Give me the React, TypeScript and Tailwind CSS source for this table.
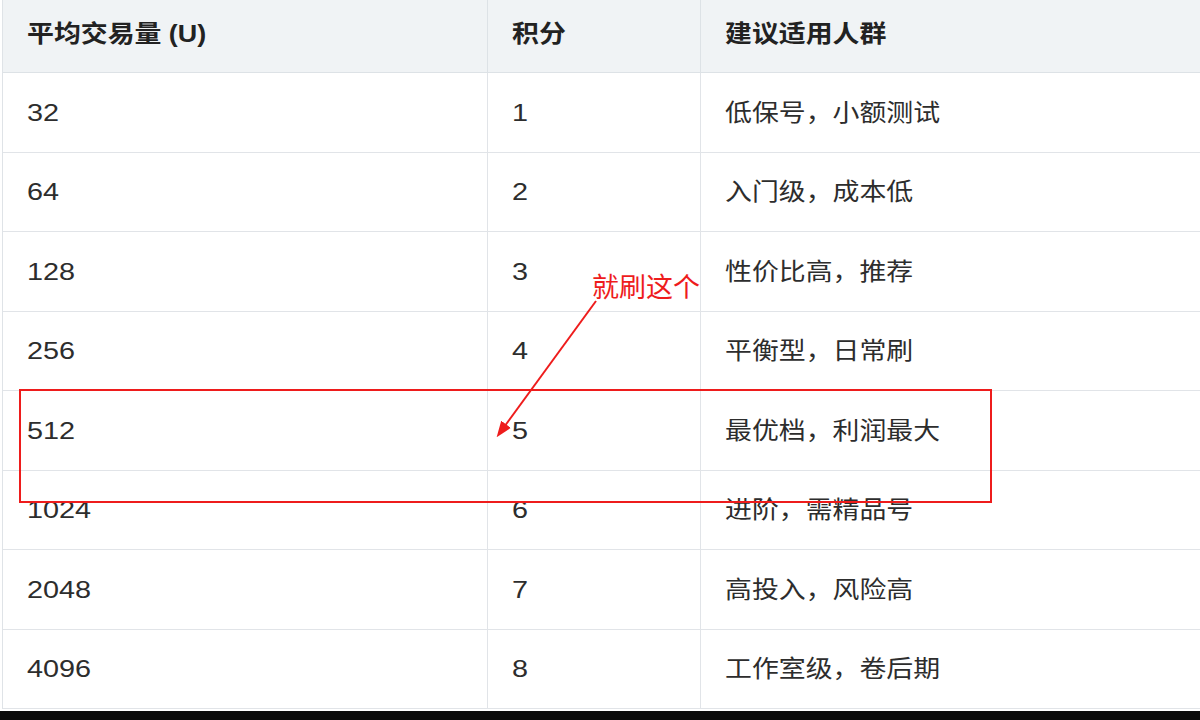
const rows = [
  { amount: "32", score: "1", who: "低保号，小额测试", h: "h-[80px]" },
  { amount: "64", score: "2", who: "入门级，成本低", h: "h-[79px]" },
  { amount: "128", score: "3", who: "性价比高，推荐", h: "h-[80px]" },
  { amount: "256", score: "4", who: "平衡型，日常刷", h: "h-[79px]" },
  { amount: "512", score: "5", who: "最优档，利润最大", h: "h-[80px]" },
  { amount: "1024", score: "6", who: "进阶，需精品号", h: "h-[79px]" },
  { amount: "2048", score: "7", who: "高投入，风险高", h: "h-[80px]" },
  { amount: "4096", score: "8", who: "工作室级，卷后期", h: "h-[79px]" },
];

// the screenshot is a little stretched sideways, so text is widened to match
const Wide = ({ children }: { children: React.ReactNode }) => (
  <span className="inline-block origin-left scale-x-[1.12] whitespace-nowrap">{children}</span>
);

const Num = ({ children }: { children: React.ReactNode }) => (
  <span className="inline-block origin-left scale-x-[1.2] whitespace-nowrap">{children}</span>
);

const Annotation = () => (
  <svg className="pointer-events-none absolute inset-0" width="1200" height="720">
    <defs>
      <marker id="head" markerWidth="8" markerHeight="8" refX="6" refY="4" orient="auto" markerUnits="strokeWidth">
        <path d="M0,1 L8,4 L0,7 z" fill="#ee1c1c" />
      </marker>
    </defs>
    <rect x="20" y="390" width="971" height="112" fill="none" stroke="#ee1c1c" strokeWidth="2" />
    <line x1="596" y1="301" x2="499" y2="434" stroke="#ee1c1c" strokeWidth="2" markerEnd="url(#head)" />
  </svg>
);

export default function App() {
  return (
    <div
      className="relative flex h-[720px] w-[1200px] flex-col overflow-hidden bg-white text-[#2d2d2d]"
      style={{ fontFamily: '"Liberation Sans", "Noto Sans CJK SC", sans-serif' }}
    >
      <div className="ml-[2px] flex flex-col border-l border-[#dfe3e7]">
        {/* header */}
        <div className="grid h-[73px] grid-cols-[485px_213px_1fr] border-b border-[#dde2e6] bg-[#f0f3f5] text-[24px] font-bold text-[#222]">
          <div className="flex items-center border-r border-[#dde2e6] pl-[24px] pb-[4px]">
            <Wide>平均交易量 (U)</Wide>
          </div>
          <div className="flex items-center border-r border-[#dde2e6] pl-[24px] pb-[4px]">
            <Wide>积分</Wide>
          </div>
          <div className="flex items-center pl-[24px] pb-[4px]">
            <Wide>建议适用人群</Wide>
          </div>
        </div>
        {rows.map((r) => (
          <div key={r.amount} className={`grid grid-cols-[485px_213px_1fr] border-b border-[#e1e4e8] text-[24px] ${r.h}`}>
            <div className="flex items-center border-r border-[#e1e4e8] pl-[24px]">
              <Num>{r.amount}</Num>
            </div>
            <div className="flex items-center border-r border-[#e1e4e8] pl-[24px]">
              <Num>{r.score}</Num>
            </div>
            <div className="flex items-center pl-[24px]">
              <Wide>{r.who}</Wide>
            </div>
          </div>
        ))}
      </div>
      <div className="mt-[2px] flex-1 bg-[#0b0b0b]" />

      <Annotation />
      <div className="absolute left-[592px] top-[275px] text-[27px] leading-none text-[#ee1c1c]">就刷这个</div>
    </div>
  );
}
